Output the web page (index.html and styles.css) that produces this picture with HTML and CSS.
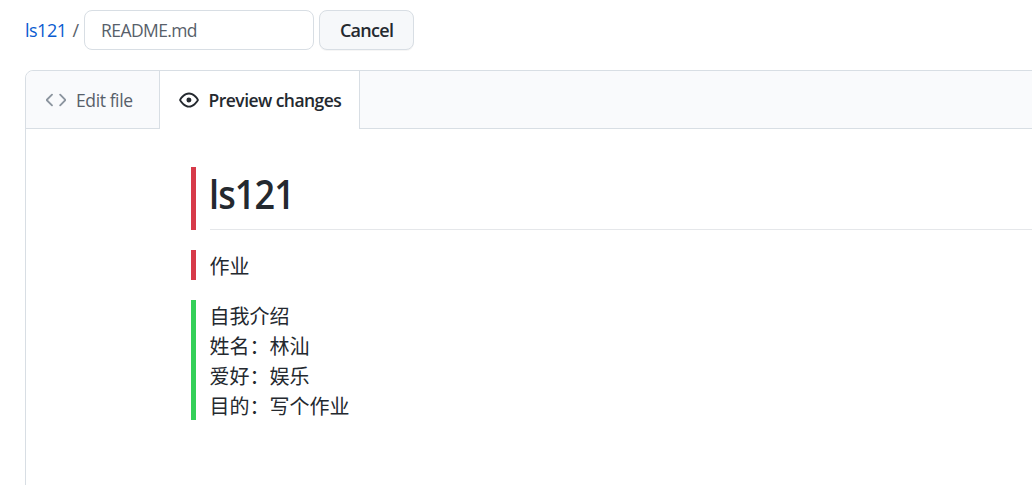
FILE: index.html
```html
<!DOCTYPE html>
<html lang="zh">
<head>
<meta charset="utf-8">
<title>README.md</title>
<link rel="stylesheet" href="styles.css">
</head>
<body>
<div class="page">
  <div class="crumbs">
    <a class="repo" href="#">ls121</a>
    <span class="sep">/</span>
    <input class="name" value="README.md" aria-label="File name">
    <button class="cancel" type="button">Cancel</button>
  </div>
  <div class="box">
    <div class="tabs">
      <div class="tab">
        <svg class="icon" viewBox="0 0 16 16" width="20" height="20"><path fill="currentColor" d="m11.28 3.22 4.25 4.25a.75.75 0 0 1 0 1.06l-4.25 4.25a.749.749 0 0 1-1.06-1.06L13.94 8l-3.72-3.72a.749.749 0 0 1 1.06-1.06Zm-6.56 0a.75.75 0 0 1 0 1.06L1 8l3.72 3.72a.749.749 0 1 1-1.06 1.06L-.59 8.53a.75.75 0 0 1 0-1.06l4.25-4.25a.75.75 0 0 1 1.06 0Z" transform="translate(.6 0)"/></svg>
        <span>Edit file</span>
      </div>
      <div class="tab active">
        <svg class="icon" viewBox="0 0 16 16" width="20" height="20"><path fill="currentColor" d="M8 2c1.981 0 3.671.992 4.933 2.078 1.27 1.091 2.187 2.345 2.637 3.023a1.62 1.62 0 0 1 0 1.798c-.45.678-1.367 1.932-2.637 3.023C11.67 13.008 9.981 14 8 14c-1.981 0-3.671-.992-4.933-2.078C1.797 10.83.88 9.576.43 8.898a1.62 1.62 0 0 1 0-1.798c.45-.677 1.367-1.931 2.637-3.022C4.33 2.992 6.019 2 8 2ZM1.679 7.932a.12.12 0 0 0 0 .136c.411.622 1.241 1.75 2.366 2.717C5.176 11.758 6.527 12.5 8 12.5c1.473 0 2.825-.742 3.955-1.715 1.124-.967 1.954-2.096 2.366-2.717a.12.12 0 0 0 0-.136c-.412-.621-1.242-1.75-2.366-2.717C10.824 4.242 9.473 3.5 8 3.5c-1.473 0-2.825.742-3.955 1.715-1.124.967-1.954 2.096-2.366 2.717ZM8 10a2 2 0 1 1-.001-3.999A2 2 0 0 1 8 10Z"/></svg>
        <span>Preview changes</span>
      </div>
    </div>
    <div class="preview">
      <div class="del heading-row">
        <h1><span class="title">ls121</span></h1>
      </div>
      <div class="del para one">作业</div>
      <div class="add para four">自我介绍<br>姓名：林汕<br>爱好：娱乐<br>目的：写个作业</div>
    </div>
  </div>
</div>
</body>
</html>
```
FILE: styles.css
```css
html, body {
  margin: 0;
  padding: 0;
  height: 100%;
  overflow: hidden;
  background: #fff;
}
body {
  font-family: "Open Sans", "Noto Sans CJK SC", sans-serif;
  color: #24292f;
}
.page {
  padding: 10px 0 0 25px;
}
.crumbs {
  display: flex;
  align-items: center;
  height: 40px;
  font-size: 18px;
}
.repo {
  color: #0a5bd0;
  text-decoration: none;
  letter-spacing: -0.5px;
}
.sep {
  color: #57606a;
  margin: 0 5px 0 6px;
}
.name {
  box-sizing: border-box;
  width: 230px;
  height: 40px;
  padding: 0 15px 0 16px;
  border: 1px solid #d8dee4;
  border-radius: 8px;
  font: inherit;
  font-size: 17.5px;
  letter-spacing: -0.6px;
  color: #57606a;
  background: #fff;
  outline: none;
}
.cancel {
  box-sizing: border-box;
  width: 95px;
  height: 40px;
  margin-left: 5px;
  border: 1px solid #d8dee4;
  border-radius: 8px;
  background: #f6f8fa;
  font: inherit;
  font-weight: 600;
  letter-spacing: -0.7px;
  color: #24292f;
  box-shadow: 0 1px 0 rgba(27, 31, 36, .04);
}
.box {
  box-sizing: border-box;
  width: 1100px;
  height: 500px;
  margin-top: 20px;
  border: 1px solid #d8dee4;
  border-radius: 8px 0 0 0;
}
.tabs {
  display: flex;
  box-sizing: border-box;
  height: 58px;
  background: #f9fafc;
  border-bottom: 1px solid #d8dee4;
  border-radius: 8px 0 0 0;
}
.tab {
  display: flex;
  align-items: center;
  gap: 10px;
  box-sizing: border-box;
  height: 57px;
  padding: 0 26px 0 20px;
  font-size: 17.5px;
  letter-spacing: -0.4px;
  color: #57606a;
}
.tab .icon {
  color: #8c959f;
  flex: none;
}
.tab.active {
  height: 58px;
  padding: 0 18px 0 19px;
  background: #fff;
  border-left: 1px solid #d8dee4;
  border-right: 1px solid #d8dee4;
  font-weight: 600;
  letter-spacing: -0.55px;
  color: #24292f;
}
.tab.active .icon {
  color: #24292f;
}
.preview {
  padding: 38px 0 0 165px;
}
.del, .add {
  border-left: 5px solid #d73a49;
  padding-left: 14px;
}
.add {
  border-left-color: #34d058;
}
.heading-row {
  height: 63px;
  box-sizing: border-box;
}
h1 {
  box-sizing: border-box;
  height: 63px;
  margin: 0;
  padding-top: 3px;
  font-size: 40px;
  line-height: 48px;
  font-weight: 600;
  border-bottom: 1px solid #e5e7ea;
}
.title {
  display: inline-block;
  letter-spacing: -1px;
  transform: scaleX(.9);
  transform-origin: 0 50%;
  margin-left: -1px;
}
.para {
  box-sizing: border-box;
  margin-top: 20px;
  padding-top: 2px;
  padding-left: 13.5px;
  font-size: 20px;
  line-height: 30px;
  font-weight: 400;
}
.one {
  height: 30px;
}
.four {
  height: 120px;
}
```
